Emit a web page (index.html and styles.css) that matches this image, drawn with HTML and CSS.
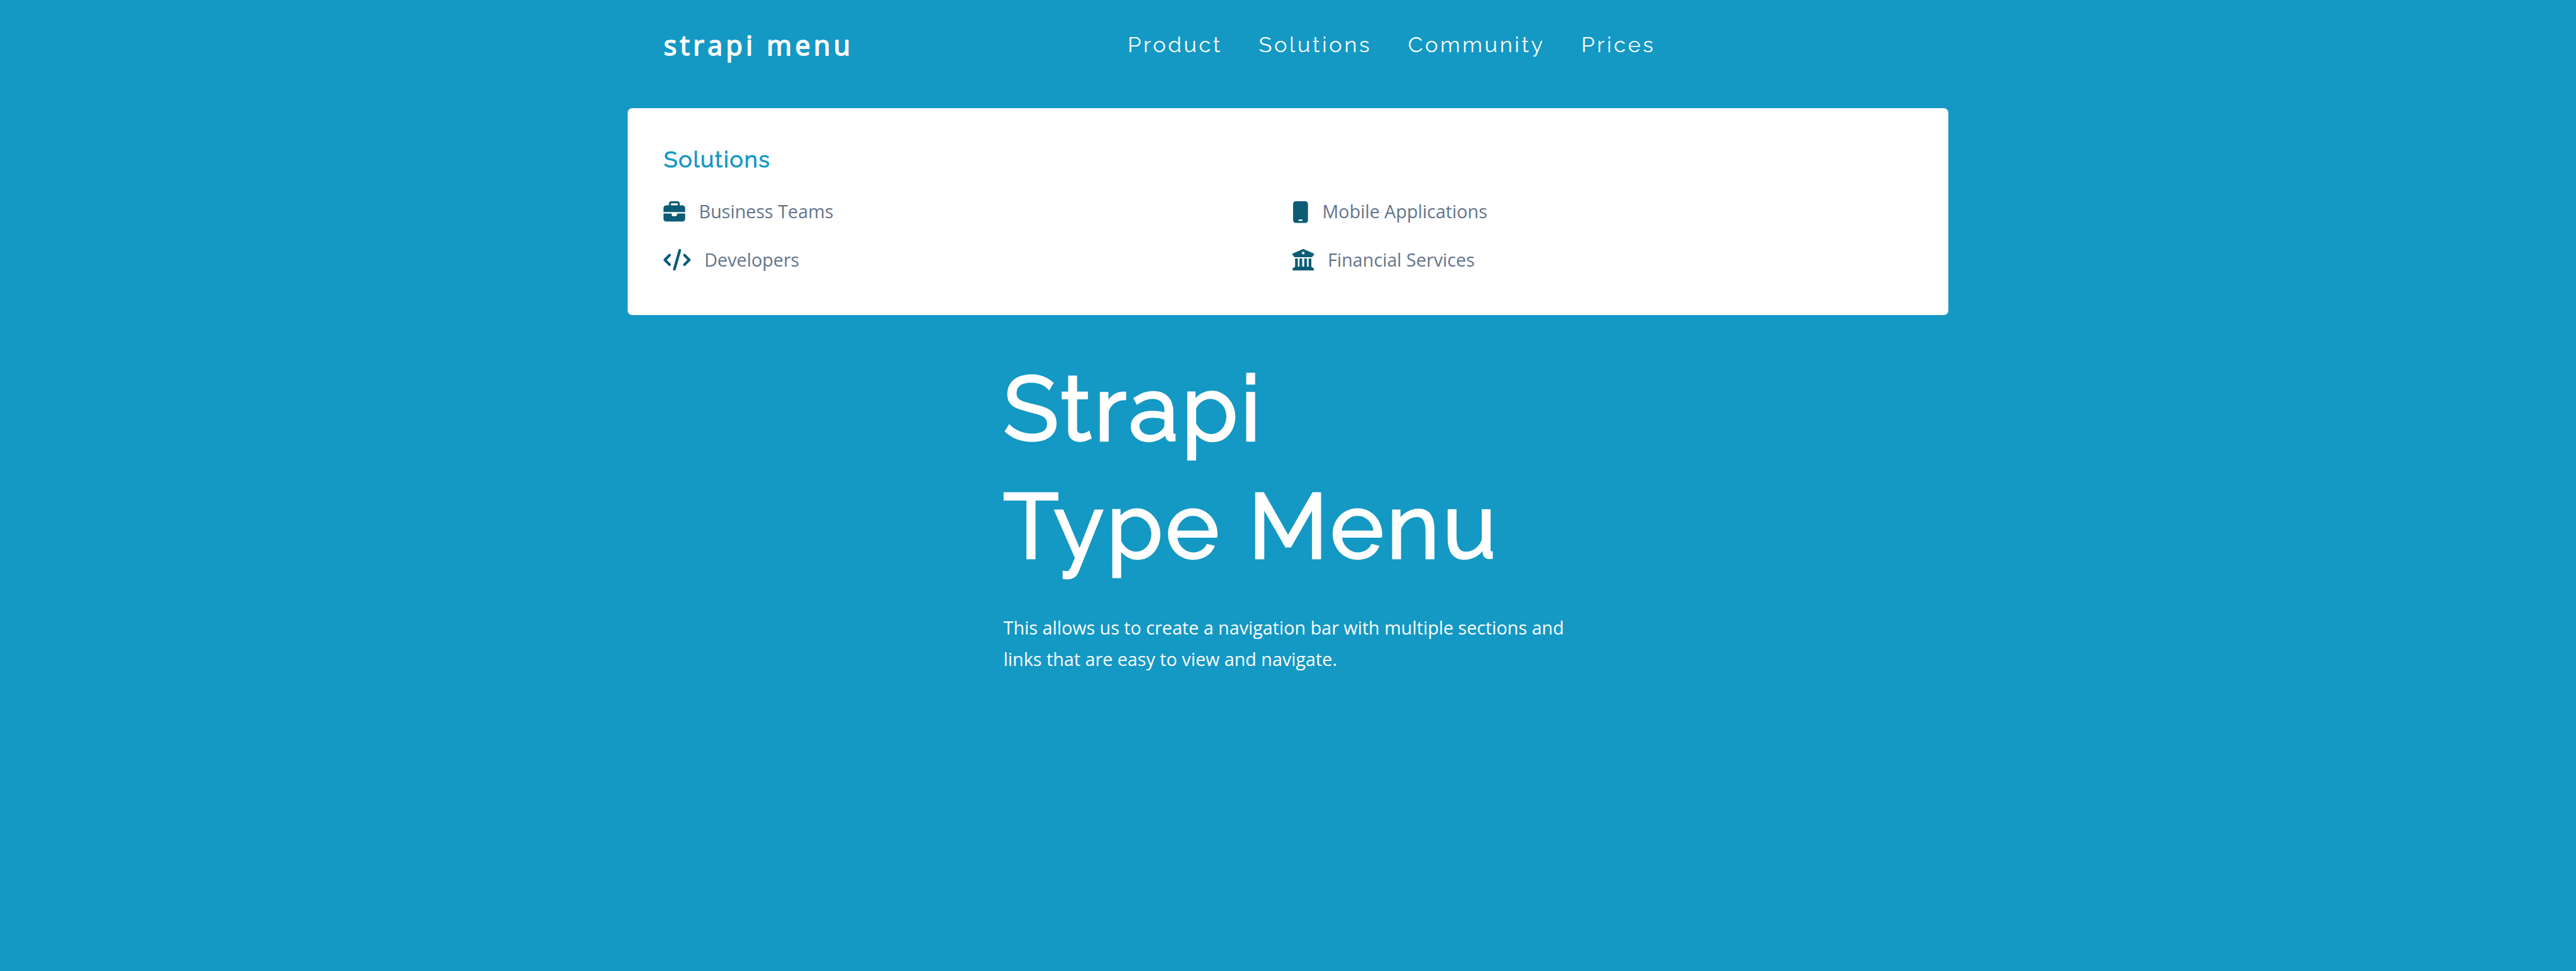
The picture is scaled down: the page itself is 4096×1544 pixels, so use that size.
FILE: index.html
```html
<!DOCTYPE html>
<html lang="en">
<head>
<meta charset="utf-8">
<title>strapi menu</title>
<link rel="stylesheet" href="styles.css">
</head>
<body>
<header class="navbar">
  <a class="logo">strapi menu</a>
  <nav class="nav-links">
    <a>Product</a>
    <a>Solutions</a>
    <a>Community</a>
    <a>Prices</a>
  </nav>
</header>

<section class="submenu">
  <h2 class="submenu-title">Solutions</h2>
  <div class="submenu-links">
    <a class="link">
      <svg class="icon" viewBox="0 0 512 512"><path d="M184 48H328c4.400 0 8 3.600 8 8V96H176V56c0-4.400 3.600-8 8-8zm-56 8V96H64C28.700 96 0 124.700 0 160v96H192 320 512V160c0-35.300-28.700-64-64-64H384V56c0-30.900-25.100-56-56-56H184c-30.900 0-56 25.100-56 56zM512 288H320v32c0 17.700-14.300 32-32 32H224c-17.700 0-32-14.300-32-32V288H0V416c0 35.300 28.700 64 64 64H448c35.300 0 64-28.700 64-64V288z"/></svg>
      Business Teams
    </a>
    <a class="link">
      <svg class="icon icon-narrow" viewBox="0 0 384 512"><path d="M80 0C44.700 0 16 28.700 16 64V448c0 35.300 28.700 64 64 64H304c35.300 0 64-28.700 64-64V64c0-35.300-28.700-64-64-64H80zm80 432h64c8.800 0 16 7.200 16 16s-7.200 16-16 16H160c-8.800 0-16-7.200-16-16s7.200-16 16-16z"/></svg>
      Mobile Applications
    </a>
    <a class="link link-lower">
      <svg class="icon icon-wide" viewBox="0 0 640 512"><path d="M392.800 1.200c-17-4.900-34.700 5-39.600 22l-128 448c-4.900 17 5 34.700 22 39.600s34.700-5 39.600-22l128-448c4.900-17-5-34.700-22-39.600zm80.600 120.100c-12.500 12.500-12.500 32.800 0 45.300L562.700 256l-89.400 89.400c-12.500 12.500-12.500 32.800 0 45.300s32.800 12.500 45.300 0l112-112c12.500-12.500 12.500-32.800 0-45.300l-112-112c-12.500-12.500-32.800-12.500-45.300 0zm-306.700 0c-12.500-12.500-32.800-12.500-45.300 0l-112 112c-12.500 12.500-12.500 32.800 0 45.300l112 112c12.500 12.500 32.800 12.500 45.300 0s12.500-32.800 0-45.300L77.300 256l89.400-89.400c12.500-12.500 12.500-32.800 0-45.300z"/></svg>
      Developers
    </a>
    <a class="link link-lower">
      <svg class="icon" viewBox="0 0 512 512"><path d="M243.400 2.600l-224 96c-14 6-21.800 21-18.700 35.800S16.800 160 32 160v8c0 13.300 10.700 24 24 24H456c13.300 0 24-10.700 24-24v-8c15.200 0 28.300-10.700 31.300-25.600s-4.800-29.900-18.700-35.800l-224-96c-8-3.400-17.200-3.400-25.200 0zM128 224H64V420.300c-.6 .3-1.200 .7-1.800 1.100l-48 32c-11.700 7.800-17 22.400-12.900 35.900S17.900 512 32 512H480c14.100 0 26.500-9.200 30.600-22.700s-1.100-28.100-12.900-35.900l-48-32c-.6-.4-1.200-.7-1.800-1.100V224H384V416H344V224H280V416H232V224H168V416H128V224zM256 64a32 32 0 1 1 0 64 32 32 0 1 1 0-64z"/></svg>
      Financial Services
    </a>
  </div>
</section>

<main class="hero">
  <h1>Strapi<br>Type Menu</h1>
  <p>This allows us to create a navigation bar with multiple sections and links that are easy to view and navigate.</p>
</main>
</body>
</html>
```
FILE: styles.css
```css
* {
  box-sizing: border-box;
  margin: 0;
  padding: 0;
}

body {
  min-height: 100vh;
  background: #1498c4;
  color: #fff;
  font-family: "Open Sans", sans-serif;
  font-size: 28.72px;
}

.navbar {
  display: flex;
  width: 2100px;
  height: 172.3px;
  margin: 0 auto;
  padding: 41px 57.4px 0;
}

.logo {
  width: 737.6px;
  padding-top: 1.3px;
  font-size: 43.08px;
  line-height: 60px;
  letter-spacing: 5.38px;
  -webkit-text-stroke: 1.7px currentColor;
}

.nav-links {
  display: flex;
  gap: 57.4px;
  padding-top: 9.5px;
  font-family: Raleway, Lato, sans-serif;
  font-size: 34.46px;
  line-height: 40px;
  letter-spacing: 3.6px;
}

.submenu {
  width: 2100px;
  height: 328.4px;
  margin: 0 auto;
  padding: 58.8px 57.4px 0;
  border-radius: 7.2px;
  background: #fff;
}

.submenu-title {
  color: #1498c4;
  font-family: Raleway, Lato, sans-serif;
  font-size: 35.9px;
  font-weight: 400;
  line-height: 44px;
  letter-spacing: 1.8px;
  -webkit-text-stroke: 1.1px currentColor;
}

.submenu-links {
  display: grid;
  grid-template-columns: 1fr 1fr;
  gap: 26.5px 14.4px;
  margin-top: 34.9px;
}

.link {
  display: flex;
  gap: 21.5px;
  color: #64748b;
  line-height: 51px;
}

.icon {
  width: 34.46px;
  height: 34.46px;
  margin-top: 10.1px;
  fill: #0c5c75;
}

.icon-narrow {
  width: 25.85px;
}

.icon-wide {
  width: 43.08px;
}

.link-lower .icon {
  margin-top: 8.3px;
}

.hero {
  width: 904.8px;
  margin: 56.6px auto 0;
}

.hero h1 {
  font-family: Raleway, Lato, sans-serif;
  font-size: 143.6px;
  font-weight: 400;
  line-height: 186.4px;
  letter-spacing: 5.3px;
  -webkit-text-stroke: 4.3px currentColor;
}

.hero p {
  margin-top: 43px;
  line-height: 50.25px;
}
```
